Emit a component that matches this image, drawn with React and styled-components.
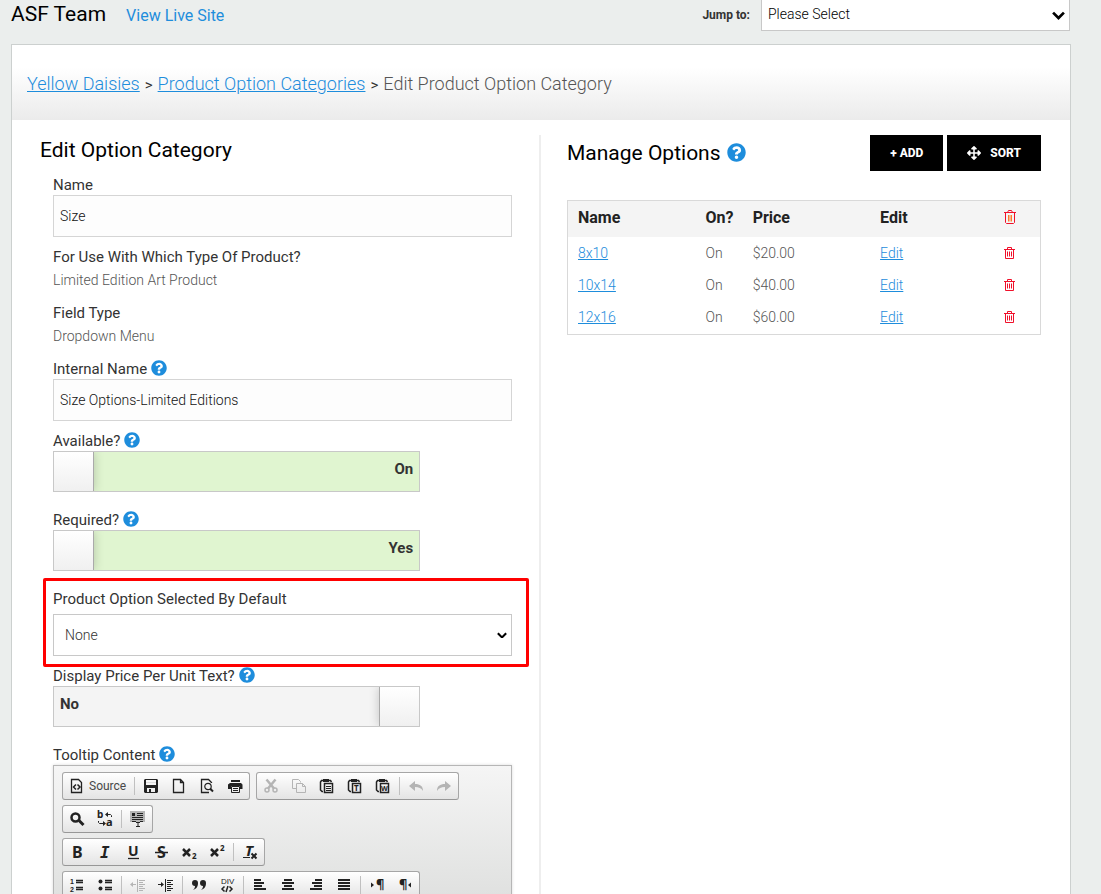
import React, { useState } from "react";
import styled, { createGlobalStyle, css } from "styled-components";
import { FaQuestionCircle, FaArrowsAlt } from "react-icons/fa";

const options = [
  { name: "8x10", price: "$20.00" },
  { name: "10x14", price: "$40.00" },
  { name: "12x16", price: "$60.00" },
];

// rows > groups > buttons, "|" is a separator inside a group
const toolbar = [
  [
    ["source", "|", "save", "new", "preview", "print"],
    ["cut", "copy", "paste", "pasteText", "pasteWord", "|", "undo", "redo"],
  ],
  [["find", "replace", "|", "selectAll"]],
  [["bold", "italic", "underline", "strike", "subscript", "superscript", "|", "removeFormat"]],
  [
    [
      "numberedList", "bulletedList", "|", "outdent", "indent", "|", "quote", "div", "|",
      "left", "center", "right", "justify", "|", "ltr", "rtl",
    ],
  ],
];

const disabledTools = ["cut", "copy", "undo", "redo", "outdent"];

const clipboard = (
  <>
    <path strokeWidth="1.5" d="M4 2.500H2.500L1.500 4v8L3 13.500h1M10 2.500h1.500L12.500 4" />
    <path strokeWidth="3" d="M4 2.500h6" />
    <path strokeWidth="1.500" d="M5.500 5.500h8v9h-8z" />
  </>
);

const pilcrow = (x) => (
  <text x={x} y="12" fontSize="13" fontWeight="700">
    ¶
  </text>
);

const glyphs = {
  source: (
    <>
      <path d="M2.500 1.500h7l3 3v10h-10z" strokeWidth="1.3" />
      <path strokeWidth="1.500" d="M7 6.500l-2.500 2.500L7 11.500M8.500 6.500L11 9l-2.500 2.500" />
    </>
  ),
  save: (
    <>
      <path className="solid" fillRule="evenodd" d="M2 1h12l1 1v12l-1 1H2l-1-1V2zm1 1v5h10V2zm1 8v4h2v-3h2v3h4v-4z" />
      <path d="M3 4.500h10" stroke="#ddd" />
    </>
  ),
  new: <path strokeWidth="1.300" d="M2.500 1.500h7l3 3v10h-10zM9.500 1.500v3h3" />,
  preview: (
    <>
      <path strokeWidth="1.300" d="M12.500 5V4.500l-3-3h-7v13H10M12.500 12v1" />
      <circle cx="9" cy="8.500" r="3.200" strokeWidth="1.200" />
      <path strokeWidth="2" d="M11 10.500l3 3" />
    </>
  ),
  print: (
    <>
      <path className="solid" d="M4 2h9v2H4zM3 5h11l1.500 1.500V11H13V8H4v3H1V6.500z" />
      <path d="M4.500 8.500h8v6h-8zM6 10.500h5M6 12.500h5" />
    </>
  ),
  cut: (
    <>
      <path strokeWidth="2.500" d="M3.500 1.500l7.500 9M12.500 1.500L5 10.500" />
      <circle cx="4" cy="12" r="2" strokeWidth="1.500" />
      <circle cx="12" cy="12" r="2" strokeWidth="1.500" />
    </>
  ),
  copy: <path d="M5 10.500H1.500v-9h6l2 2v1M5.500 5.500h6l3 3v6h-9zM11.500 5.500v3h3" />,
  paste: (
    <>
      {clipboard}
      <path d="M7 8.500h5M7 10.500h5M7 12.500h5" />
    </>
  ),
  pasteText: (
    <>
      {clipboard}
      <text x="7" y="13" fontSize="8" fontWeight="700">T</text>
    </>
  ),
  pasteWord: (
    <>
      {clipboard}
      <text x="6" y="13" fontSize="7" fontWeight="700">W</text>
    </>
  ),
  undo: <path className="solid" d="M1 8l6-5v3c5 0 8 2 8 7-2-3-4-4-8-4v4z" />,
  redo: <path className="solid" d="M15 8L9 3v3C4 6 1 8 1 13c2-3 4-4 8-4v4z" />,
  find: (
    <>
      <circle cx="6.500" cy="6.500" r="4" strokeWidth="2.500" />
      <path strokeWidth="3" d="M10 9.500l4.500 4.500" />
    </>
  ),
  replace: (
    <>
      <text x="0" y="7" fontSize="10" fontWeight="700">b</text>
      <text x="9" y="15" fontSize="11" fontWeight="700">a</text>
      <path d="M14.500 6V4.500L13.500 3.500H10" />
      <path className="solid" d="M8 3.500L11 1v5zM9 12.500L6 10v5z" />
      <path d="M1.500 10v1.500l1 1H7" />
    </>
  ),
  selectAll: (
    <>
      <path fill="#b4b4b4" stroke="none" d="M0 0h15v11H0z" />
      <path d="M7 2.500h6M7 4.500h6M2 6.500h11M2 8.500h11M2 10.500h4M10 10.500h3" />
      <path className="solid" d="M2 2h3v3H2z" />
      <path d="M6 11.500h4M8 12v4M6 15.500h4" />
    </>
  ),
  bold: <text x="3" y="14" fontSize="16" fontWeight="700">B</text>,
  italic: (
    <text x="3" y="14" fontSize="16" fontWeight="700" fontStyle="italic" className="mono">
      I
    </text>
  ),
  underline: (
    <>
      <text x="3" y="12" fontSize="14" fontWeight="700">U</text>
      <path d="M3 14.500h11" strokeWidth="1.300" />
    </>
  ),
  strike: (
    <>
      <text x="4" y="14" fontSize="16" fontWeight="700">S</text>
      <path d="M2 8.500h13" strokeWidth="1.500" />
    </>
  ),
  subscript: (
    <>
      <path strokeWidth="2.500" d="M2 5l7 7M9 5l-7 7" />
      <text x="11" y="15" fontSize="8" fontWeight="700">2</text>
    </>
  ),
  superscript: (
    <>
      <path strokeWidth="2.500" d="M2 5l7 7M9 5l-7 7" />
      <text x="11" y="7" fontSize="8" fontWeight="700">2</text>
    </>
  ),
  removeFormat: (
    <>
      <text x="3" y="12" fontSize="15" fontWeight="700" fontStyle="italic">T</text>
      <path d="M1 13.500h7" />
      <path strokeWidth="2" d="M9.500 9.500l5 5M14.500 9.500l-5 5" />
    </>
  ),
  numberedList: (
    <>
      <text x="1" y="7" fontSize="7" fontWeight="700" className="digit">1</text>
      <text x="1" y="15" fontSize="7" fontWeight="700" className="digit">2</text>
      <path strokeWidth="1.300" d="M7 3.500h7M7 5.500h7M7 10.500h7M7 12.500h7" />
    </>
  ),
  bulletedList: (
    <>
      <circle className="solid" cx="3.500" cy="4.500" r="2" />
      <circle className="solid" cx="3.500" cy="11.500" r="2" />
      <path strokeWidth="1.300" d="M8 3.500h7M8 5.500h7M8 10.500h7M8 12.500h7" />
    </>
  ),
  outdent: (
    <>
      <path d="M7.500 2v13M9 3.500h6M9 5.500h4M9 7.500h6M9 9.500h4M9 11.500h6M9 13.500h4M2 7.500h4" />
      <path className="solid" d="M0 7.500L3 5v5z" />
    </>
  ),
  indent: (
    <>
      <path d="M7.500 2v13M9 3.500h6M9 5.500h4M9 7.500h6M9 9.500h4M9 11.500h6M9 13.500h4M0 7.500h4" />
      <path className="solid" d="M6 7.500L3 5v5z" />
    </>
  ),
  quote: (
    <>
      <path className="solid" d="M4 3a3 3 0 0 1 3 3c0 4-2 6-5 7 1-1 2-2 2-4a3 3 0 0 1 0-6z" />
      <path className="solid" d="M12 3a3 3 0 0 1 3 3c0 4-2 6-5 7 1-1 2-2 2-4a3 3 0 0 1 0-6z" />
    </>
  ),
  div: (
    <>
      <text x="2" y="7" fontSize="8" className="digit">DIV</text>
      <path strokeWidth="1.500" d="M5.500 9.500L3 12l2.500 2.500M10.500 9.500L13 12l-2.500 2.500M9 9l-2 6" />
    </>
  ),
  left: <path strokeWidth="2" d="M2 3h7M2 6h10M2 9h8M2 12h12" />,
  center: <path strokeWidth="2" d="M4 3h8M2 6h12M4 9h8M2 12h12" />,
  right: <path strokeWidth="2" d="M7 3h7M4 6h10M6 9h8M2 12h12" />,
  justify: <path strokeWidth="2" d="M2 3h12M2 6h12M2 9h12M2 12h12" />,
  ltr: (
    <>
      <path className="solid" d="M2 5.500v5L5 8z" />
      {pilcrow(7)}
    </>
  ),
  rtl: (
    <>
      {pilcrow(2)}
      <path className="solid" d="M14 5.500v5L11 8z" />
    </>
  ),
};

function Help({ about, large }) {
  return (
    <HelpButton type="button" aria-label={`Help: ${about}`} $large={large}>
      <FaQuestionCircle />
    </HelpButton>
  );
}

function Field({ id, label, help, children, ...rest }) {
  return (
    <FieldBox {...rest}>
      <FieldHead>
        {id ? <label htmlFor={id}>{label}</label> : <span>{label}</span>}
        {help && <Help about={label} />}
      </FieldHead>
      {children}
    </FieldBox>
  );
}

function Toggle({ id, on, off, defaultOn }) {
  const [checked, setChecked] = useState(defaultOn);
  return (
    <ToggleBox $on={checked}>
      <input id={id} type="checkbox" checked={checked} onChange={() => setChecked(!checked)} />
      <Knob $on={checked} />
      <ToggleText>{checked ? on : off}</ToggleText>
    </ToggleBox>
  );
}

function Chevron({ size }) {
  return (
    <ChevronIcon $size={size} viewBox="0 0 12 8" aria-hidden="true">
      <path d="M1 1.500l5 5 5-5" />
    </ChevronIcon>
  );
}

function Trash({ header }) {
  if (header) {
    return (
      <TrashIcon $width={12} viewBox="0 0 12 14" aria-hidden="true">
        <path d="M3.500 2.500L4.500 0.500h3l1 2M0 2.500h12M1.500 3v9.500l1 1h7l1-1V3" />
        <path stroke="#ff7a2a" d="M4.500 5v6.500M6 5v6.500M7.500 5v6.500" />
      </TrashIcon>
    );
  }
  return (
    <TrashIcon $width={11} viewBox="0 0 11 12" aria-hidden="true">
      <path d="M3.500 2V0.500h4V2M0 2.500h11M1.500 3v8.500h8V3M3.500 4.500v5M5.500 4.500v5M7.500 4.500v5" />
    </TrashIcon>
  );
}

function Tool({ name }) {
  if (name === "|") return <Separator />;
  return (
    <ToolButton type="button" aria-label={name} disabled={disabledTools.includes(name)}>
      <Glyph viewBox="0 0 16 16" aria-hidden="true">
        {glyphs[name]}
      </Glyph>
      {name === "source" && <span>Source</span>}
    </ToolButton>
  );
}

export default function App() {
  return (
    <Page>
      <GlobalStyle />
      <Header>
        <Team>ASF Team</Team>
        <LiveLink href="#live">View Live Site</LiveLink>
        <JumpLabel htmlFor="jump">Jump to:</JumpLabel>
        <JumpBox>
          <JumpSelect id="jump">
            <option>Please Select</option>
          </JumpSelect>
          <Chevron size={13} />
        </JumpBox>
      </Header>

      <Panel>
        <Crumbs>
          <a href="#daisies">Yellow Daisies</a>
          <i>&gt;</i>
          <a href="#categories">Product Option Categories</a>
          <i>&gt;</i>
          <span>Edit Product Option Category</span>
        </Crumbs>

        <Columns>
          <FormColumn>
            <Title>Edit Option Category</Title>
            <Fields>
              <Field id="name" label="Name">
                <TextInput id="name" defaultValue="Size" />
              </Field>
              <Field label="For Use With Which Type Of Product?">
                <Value>Limited Edition Art Product</Value>
              </Field>
              <Field label="Field Type">
                <Value>Dropdown Menu</Value>
              </Field>
              <Field id="internal" label="Internal Name" help>
                <TextInput id="internal" defaultValue="Size Options-Limited Editions" />
              </Field>
              <Field id="available" label="Available?" help>
                <Toggle id="available" on="On" off="Off" defaultOn />
              </Field>
              <Field id="required" label="Required?" help>
                <Toggle id="required" on="Yes" off="No" defaultOn />
              </Field>
              <Field id="default" label="Product Option Selected By Default" $marked>
                <SelectBox>
                  <FormSelect id="default">
                    <option>None</option>
                  </FormSelect>
                  <Chevron size={10} />
                </SelectBox>
              </Field>
              <Field id="unit" label="Display Price Per Unit Text?" help>
                <Toggle id="unit" on="Yes" off="No" defaultOn={false} />
              </Field>
              <Field id="tooltip" label="Tooltip Content" help>
                <Editor>
                  <Toolbox>
                    {toolbar.map((row, i) => (
                      <ToolRow key={i}>
                        {row.map((group, j) => (
                          <ToolGroup key={j}>
                            {group.map((name, k) => (
                              <Tool key={k} name={name} />
                            ))}
                          </ToolGroup>
                        ))}
                      </ToolRow>
                    ))}
                  </Toolbox>
                  <EditorText id="tooltip" />
                </Editor>
              </Field>
            </Fields>
          </FormColumn>

          <OptionsColumn>
            <OptionsHead>
              <Title>Manage Options</Title>
              <Help about="Manage Options" large />
              <Actions>
                <ActionButton type="button">+ ADD</ActionButton>
                <ActionButton type="button">
                  <FaArrowsAlt size={14} />
                  SORT
                </ActionButton>
              </Actions>
            </OptionsHead>
            <Table>
              <thead>
                <tr>
                  <Th $width="27%">Name</Th>
                  <Th $width="10%">On?</Th>
                  <Th $width="27%">Price</Th>
                  <Th $width="26%">Edit</Th>
                  <Th $width="10%">
                    <Trash header />
                  </Th>
                </tr>
              </thead>
              <tbody>
                {options.map((option) => (
                  <tr key={option.name}>
                    <Td>
                      <a href="#option">{option.name}</a>
                    </Td>
                    <Td>On</Td>
                    <Td>{option.price}</Td>
                    <Td>
                      <a href="#edit">Edit</a>
                    </Td>
                    <Td>
                      <IconButton type="button" aria-label={`Delete ${option.name}`}>
                        <Trash />
                      </IconButton>
                    </Td>
                  </tr>
                ))}
              </tbody>
            </Table>
          </OptionsColumn>
        </Columns>
      </Panel>
    </Page>
  );
}

const GlobalStyle = createGlobalStyle`
  * {
    box-sizing: border-box;
  }
  body {
    margin: 0;
    background: #ebeeed;
    color: #333;
    font-family: Roboto, "Liberation Sans", sans-serif;
    font-size: 15px;
  }
  a {
    color: #1e8ddc;
  }
  button, input, select, textarea {
    font-family: inherit;
  }
`;

const Page = styled.div`
  display: flex;
  flex-direction: column;
  height: 100vh;
  overflow: hidden;
`;

const Header = styled.header`
  display: flex;
  flex: none;
  align-items: baseline;
  height: 44px;
  padding: 0 31px 0 11px;
`;

const Team = styled.h1`
  margin: 0;
  color: #000;
  font-size: 21px;
  font-weight: 400;
  line-height: 29px;
`;

const LiveLink = styled.a`
  margin-left: 20px;
  font-size: 16px;
  text-decoration: none;
`;

const JumpLabel = styled.label`
  align-self: flex-start;
  margin-left: auto;
  font-size: 12px;
  font-weight: 700;
  line-height: 31px;
`;

const selectStyle = css`
  grid-area: 1 / 1;
  width: 100%;
  border: 1px solid #c8c8c8;
  border-radius: 0;
  background: #fff;
  appearance: none;
  font-size: 14px;
  font-weight: 300;
`;

const JumpBox = styled.div`
  display: grid;
  align-items: center;
  align-self: flex-start;
  width: 309px;
  margin-left: 11px;
`;

const JumpSelect = styled.select`
  ${selectStyle}
  height: 31px;
  padding: 0 6px 2px;
  border-top: 0;
  color: #000;
`;

const ChevronIcon = styled.svg`
  grid-area: 1 / 1;
  justify-self: end;
  width: ${({ $size }) => $size}px;
  margin-right: 5px;
  fill: none;
  stroke: #000;
  stroke-width: 2.5;
  pointer-events: none;
`;

const Panel = styled.main`
  flex: none;
  margin: 0 30px 0 11px;
  border: 1px solid #ccd0cf;
  background: #fff;
`;

const Crumbs = styled.nav`
  height: 75px;
  padding: 0 15px;
  background: linear-gradient(#fff 30%, #ebebeb);
  font-size: 18px;
  font-weight: 300;
  line-height: 78px;
  i {
    margin: 0 5px;
    font-size: 15px;
    font-style: normal;
    font-weight: 400;
  }
  span {
    color: #555;
  }
`;

const Columns = styled.div`
  display: grid;
  grid-template-columns: 1fr 1fr;
  margin-top: 15px;
`;

const FormColumn = styled.section`
  padding: 0 27px 20px 28px;
  border-right: 2px solid #eee;
`;

const OptionsColumn = styled.section`
  padding: 0 29px 0 26px;
`;

const Title = styled.h2`
  margin: 0;
  color: #000;
  font-size: 21px;
  font-weight: 400;
  line-height: 30px;
`;

const Fields = styled.form`
  display: flex;
  flex-direction: column;
  gap: 10px;
  margin: 10px 0 0 13px;
`;

const FieldBox = styled.div`
  position: relative;
  ${({ $marked }) =>
    $marked &&
    css`
      &::after {
        content: "";
        position: absolute;
        inset: -11px -17px -11px -10px;
        border: 3px solid #f00;
        border-radius: 2px;
        pointer-events: none;
      }
    `}
`;

const FieldHead = styled.div`
  display: flex;
  align-items: center;
  gap: 4px;
  height: 20px;
  line-height: 20px;
`;

const HelpButton = styled.button`
  display: flex;
  padding: 0 0 2px;
  border: 0;
  background: none;
  color: #1e8ddc;
  font-size: ${({ $large }) => ($large ? 19 : 16)}px;
  cursor: pointer;
`;

const Value = styled.div`
  color: #555;
  font-size: 14px;
  font-weight: 300;
  line-height: 26px;
`;

const TextInput = styled.input`
  display: block;
  width: 100%;
  height: 42px;
  padding: 0 6px;
  border: 1px solid #d5d5d5;
  background: #fdfdfd;
  color: #111;
  font-size: 14px;
  font-weight: 300;
`;

const ToggleBox = styled.label`
  display: flex;
  flex-direction: ${({ $on }) => ($on ? "row" : "row-reverse")};
  justify-content: space-between;
  width: 80%;
  height: 41px;
  margin-bottom: 8px;
  border: 1px solid #c8c8c8;
  background: ${({ $on }) => ($on ? "#e0f5d0" : "#f4f4f4")};
  overflow: hidden;
  cursor: pointer;
  input {
    position: absolute;
    opacity: 0;
  }
`;

const Knob = styled.span`
  width: 40px;
  border: solid #aaa;
  border-width: ${({ $on }) => ($on ? "0 1px 0 0" : "0 0 0 1px")};
  background: linear-gradient(#fff, #f0f0f0);
  box-shadow: 0 0 10px rgba(0, 0, 0, 0.2);
`;

const ToggleText = styled.span`
  padding: 0 6px;
  font-weight: 700;
  line-height: 35px;
`;

const SelectBox = styled.div`
  display: grid;
  align-items: center;
  margin-top: 5px;
`;

const FormSelect = styled.select`
  ${selectStyle}
  height: 42px;
  padding: 0 11px;
  color: #333;
`;

const Editor = styled.div`
  border: 1px solid #b6b6b6;
  box-shadow: 0 0 3px rgba(0, 0, 0, 0.15);
`;

const Toolbox = styled.div`
  display: flex;
  flex-direction: column;
  gap: 5px;
  padding: 6px 8px 100px;
  background: linear-gradient(#f5f5f5, #cfd1cf);
`;

const ToolRow = styled.div`
  display: flex;
  gap: 6px;
`;

const ToolGroup = styled.div`
  display: flex;
  height: 28px;
  border: 1px solid #a6a6a6;
  border-bottom-color: #979797;
  border-radius: 3px;
  background: linear-gradient(#fff, #e4e4e4);
`;

const ToolButton = styled.button`
  display: flex;
  align-items: center;
  gap: 4px;
  padding: 0 6px;
  border: 0;
  background: none;
  color: #222;
  font-size: 12px;
  &:disabled {
    color: #b4b4b4;
  }
  span {
    color: #484848;
  }
`;

const Separator = styled.span`
  width: 1px;
  margin: 4px 2px;
  background: #c0c0c0;
`;

const Glyph = styled.svg`
  width: 16px;
  height: 16px;
  fill: none;
  stroke: currentColor;
  overflow: visible;
  .solid,
  text {
    fill: currentColor;
    stroke: none;
  }
  text {
    font-family: "Noto Sans", sans-serif;
  }
  .mono {
    font-family: "DejaVu Sans Mono", monospace;
  }
  .digit {
    font-family: "Liberation Sans", sans-serif;
  }
`;

const EditorText = styled.textarea`
  display: block;
  width: 100%;
  height: 200px;
  border: 0;
`;

const OptionsHead = styled.div`
  display: flex;
  align-items: center;
  gap: 6px;
  height: 36px;
  margin-bottom: 29px;
`;

const Actions = styled.div`
  display: flex;
  gap: 4px;
  margin-left: auto;
`;

const ActionButton = styled.button`
  display: flex;
  align-items: center;
  gap: 9px;
  height: 36px;
  padding: 0 20px;
  border: 0;
  background: #000;
  color: #fff;
  font-size: 12px;
  font-weight: 800;
  cursor: pointer;
`;

const Table = styled.table`
  width: 100%;
  padding-bottom: 1px;
  border: 1px solid #d9d9d9;
  border-spacing: 0;
  table-layout: fixed;
`;

const Th = styled.th`
  width: ${({ $width }) => $width};
  height: 36px;
  padding: 0 0 4px 10px;
  background: #f4f4f4;
  color: #222;
  font-size: 16px;
  font-weight: 700;
  text-align: left;
`;

const Td = styled.td`
  height: 32px;
  padding: 0 0 0 10px;
  color: #555;
  font-size: 14px;
  font-weight: 300;
`;

const IconButton = styled.button`
  display: flex;
  padding: 0;
  border: 0;
  background: none;
  cursor: pointer;
`;

const TrashIcon = styled.svg`
  display: block;
  width: ${({ $width }) => $width}px;
  margin-left: 1px;
  fill: none;
  stroke: #f0102a;
`;
